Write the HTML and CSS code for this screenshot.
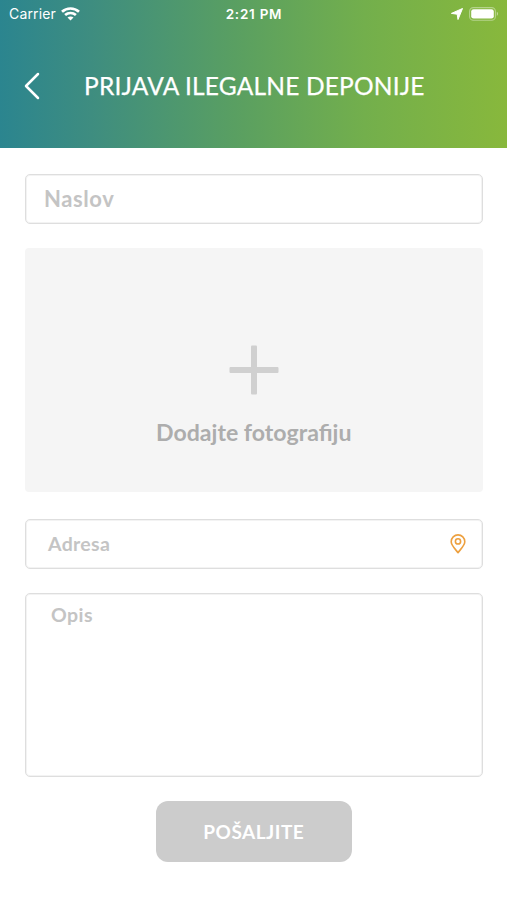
FILE: index.html
```html
<!DOCTYPE html>
<html lang="bs">
<head>
<meta charset="utf-8">
<title>Prijava ilegalne deponije</title>
<link rel="stylesheet" href="styles.css">
</head>
<body>
<header class="header">
  <div class="status">
    <div class="carrier"><span>Carrier</span>
      <svg width="19" height="14" viewBox="0 0 19 14"><g fill="none" stroke="#fff" stroke-width="2.7"><path d="M1 4.8C5.8.4 13.2.4 18 4.8"/><path d="M4.1 8.1C7.2 5.3 11.8 5.3 14.9 8.1"/></g><path d="M6.5 10.6c1.6-1.5 4.4-1.5 6 0L9.5 13.6z" fill="#fff"/></svg>
    </div>
    <time class="time">2:21 PM</time>
    <div class="indicators">
      <svg width="12" height="12" viewBox="0 0 12 12"><path d="M11.5.5 7 11.5 6.2 6.2.4 5.4z" fill="#fff" stroke="#fff" stroke-width="1" stroke-linejoin="round"/></svg>
      <svg width="30" height="14" viewBox="0 0 30 14"><rect x=".6" y=".6" width="25.8" height="12.6" rx="3.8" fill="none" stroke="#fff" stroke-opacity=".4" stroke-width="1.1"/><rect x="2.2" y="2.2" width="22.6" height="9.4" rx="2.4" fill="#fff"/><path d="M27.8 4.8c1.6.7 1.6 3.5 0 4.2z" fill="#fff" fill-opacity=".5"/></svg>
    </div>
  </div>
  <div class="bar">
    <svg class="back" width="16" height="28" viewBox="0 0 16 28"><path d="M14 2 2 14 14 26" fill="none" stroke="#fff" stroke-width="2.5" stroke-linecap="round" stroke-linejoin="round"/></svg>
    <h1 class="title">PRIJAVA ILEGALNE DEPONIJE</h1>
  </div>
</header>
<main class="form">
  <div class="field field-title"><span class="naslov">Naslov</span></div>
  <div class="photo">
    <svg width="50" height="50" viewBox="0 0 50 50" fill="#d0d0d0"><rect x="22" y=".5" width="6" height="49" rx="1"/><rect x=".5" y="22" width="49" height="6" rx="1"/></svg>
    <span class="photo-label">Dodajte fotografiju</span>
  </div>
  <div class="field field-address"><span class="adresa">Adresa</span>
    <svg width="16" height="20" viewBox="0 0 16 20" fill="none" stroke="#eda03f" stroke-width="1.6"><path d="M8 18.7C5.3 15.1 1.2 11.2 1.2 7.7a6.8 6.8 0 0 1 13.6 0C14.8 11.2 10.7 15.1 8 18.7z" stroke-linejoin="round"/><circle cx="8" cy="7.4" r="2.6"/></svg>
  </div>
  <div class="field field-text"><span class="opis">Opis</span></div>
  <button class="submit"><span>POŠALJITE</span></button>
</main>
</body>
</html>
```
FILE: styles.css
```css
* { box-sizing: border-box; }
body { margin: 0; height: 900px; background: #fff; font-family: Lato, sans-serif; overflow: hidden; }
svg { display: block; flex: none; }
span, h1, time { white-space: nowrap; }
.header { height: 147.5px; background: linear-gradient(90deg, #2b858f 0%, #3e8d80 18%, #5ba060 48%, #73af4c 72%, #88b83c 100%); color: #fff; }
.status { display: grid; grid-template-columns: 1fr auto 1fr; height: 27px; padding: 0 8px 0 9px; align-items: center; font-family: Inter, sans-serif; }
.carrier { display: flex; align-items: center; gap: 5px; font-size: 14px; letter-spacing: .15px; }
.time { font-size: 13.5px; font-weight: 600; letter-spacing: .75px; }
.indicators { display: flex; align-items: center; justify-content: flex-end; gap: 5px; }
.indicators svg:first-child { margin-right: 1px; }
.bar { display: flex; align-items: center; height: 118px; padding-left: 24px; }
.title { margin: 0 0 0 44px; font-size: 24.5px; line-height: 30px; font-weight: 400; letter-spacing: .18px; -webkit-text-stroke: .25px #fff; }
.form { display: flex; flex-direction: column; padding: 26.5px 24.5px 0 25px; }
.field { display: flex; align-items: center; justify-content: space-between; border: 1px solid #dedede; border-radius: 5px; box-shadow: inset 0 0 0 1px #f3f3f3; color: #c4c4c4; font-weight: 700; height: 50px; }
.field-title { padding: 0 0 1px 18px; font-size: 22px; letter-spacing: .6px; }
.photo { display: flex; flex-direction: column; align-items: center; height: 244px; margin: 24px 0 27px; padding-top: 97px; background: #f5f5f5; border-radius: 4px; }
.photo-label { margin-top: 23px; font-size: 23.1px; line-height: 28px; font-weight: 700; color: #adadad; }
.field-address { padding: 0 16px 0 22px; font-size: 19.5px; letter-spacing: .3px; }
.adresa { padding-bottom: 1px; }
.field-text { height: 184px; margin-top: 24px; padding: 9px 0 0 25px; align-items: flex-start; font-size: 19.5px; letter-spacing: .45px; }
.submit { width: 196px; height: 61px; margin: 24px auto 0; padding: 0 0 1px; border: 0; border-radius: 12px; background: #ccc; color: #fff; font: 700 19px Lato, sans-serif; letter-spacing: .5px; }
```
